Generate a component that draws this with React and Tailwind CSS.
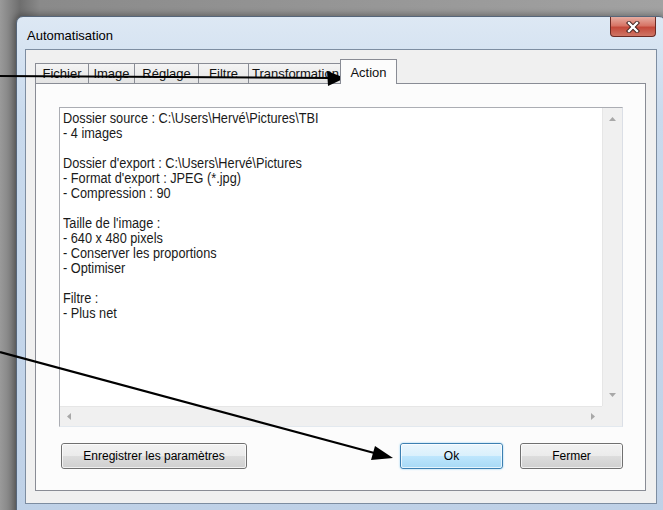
import React from "react";

const lines = [
  "Dossier source : C:\\Users\\Hervé\\Pictures\\TBI",
  "- 4 images",
  "",
  "Dossier d'export : C:\\Users\\Hervé\\Pictures",
  "- Format d'export : JPEG (*.jpg)",
  "- Compression : 90",
  "",
  "Taille de l'image :",
  "- 640 x 480 pixels",
  "- Conserver les proportions",
  "- Optimiser",
  "",
  "Filtre :",
  "- Plus net",
];

const tabs = [
  { label: "Fichier", w: "w-[54px]" },
  { label: "Image", w: "w-[47px]" },
  { label: "Réglage", w: "w-[65px]" },
  { label: "Filtre", w: "w-[51px]" },
  { label: "Transformation", w: "w-[95px]" },
];

// small greyed scroll arrows
function Tri({ dir }) {
  const horiz = dir === "left" || dir === "right";
  const pts = {
    up: "0,4 3.5,0 7,4",
    down: "0,0 7,0 3.5,4",
    left: "4,0 4,7 0,3.5",
    right: "0,0 0,7 4,3.5",
  }[dir];
  return (
    <svg width={horiz ? 4 : 7} height={horiz ? 7 : 4} viewBox={horiz ? "0 0 4 7" : "0 0 7 4"}>
      <polygon points={pts} fill="#a8a8a8" />
    </svg>
  );
}

function Btn({ children, w, primary }) {
  const look = primary
    ? "border-[#3c7fb1] bg-[linear-gradient(to_bottom,#eaf6fd_0%,#d9f0fc_50%,#bee6fd_50%,#a7d9f5_100%)] shadow-[0_0_2px_#7fc6ee]"
    : "border-[#707070] bg-[linear-gradient(to_bottom,#f2f2f2_0%,#ebebeb_50%,#dddddd_50%,#cfcfcf_100%)]";
  return (
    <div className={`${w} h-[26px] rounded-[3px] border ${look} flex items-center justify-center text-[12px] text-black`}>
      <div className="w-full h-full rounded-[2px] border border-white/70 flex items-center justify-center">{children}</div>
    </div>
  );
}

function CloseButton() {
  return (
    <div className="w-[46px] h-[20px] rounded-b-[4px] border border-t-0 border-[#6b2a24] bg-[linear-gradient(to_bottom,#e6ada2_0%,#d77566_45%,#c44a3b_55%,#cf7565_100%)] flex items-center justify-center">
      <svg width="14" height="12" viewBox="0 0 14 12">
        <path d="M3 2 L11 10 M11 2 L3 10" stroke="#3b1f1c" strokeWidth="4.2" strokeLinecap="square" />
        <path d="M3 2 L11 10 M11 2 L3 10" stroke="#ffffff" strokeWidth="2.4" strokeLinecap="square" />
      </svg>
    </div>
  );
}

export default function App() {
  return (
    <div className="relative w-[663px] h-[510px] overflow-hidden bg-[linear-gradient(to_right,#9a9a9a,#6e6e6e_3%,#8a8a8a_6%,#a2a2a2)] pl-[16px] pt-[16px] font-['Liberation_Sans',Arial,sans-serif]">
      <div className="w-[650px] h-[500px] rounded-t-[7px] border border-[#56667a] bg-[linear-gradient(to_bottom,#dde8f4,#c9daed_20%,#bfd1e7)] shadow-[0_0_6px_2px_rgba(0,0,0,0.3)] flex flex-col">
        {/* title bar */}
        <div className="h-[32px] shrink-0 flex items-start justify-between pl-[10px] pr-[9px]">
          <span className="mt-[9px] text-[13px] text-black">Automatisation</span>
          <CloseButton />
        </div>

        {/* client area */}
        <div className="mx-[8px] h-[455px] shrink-0 border border-[#7d8da1] bg-[#f0f0f0] pt-[9px] pl-[9px] pr-[10px]">
          <div className="h-[24px] flex items-end">
            {tabs.map((t, i) => (
              <div
                key={t.label}
                className={`${t.w} ${i === 0 ? "" : "-ml-px"} h-[20px] border border-b-0 border-[#898c95] bg-[linear-gradient(to_bottom,#f4f4f4,#e4e4e4)] flex items-center justify-center text-[13px] text-[#111]`}
              >
                {t.label}
              </div>
            ))}
            <div className="relative z-10 w-[57px] -ml-[3px] h-[25px] -mb-px border border-b-0 border-[#898c95] bg-[#fcfcfc] flex items-start justify-center pt-[3px] text-[13px] text-[#111]">
              Action
            </div>
          </div>

          <div className="h-[408px] border border-[#898c95] bg-[#fcfcfc] pt-[23px] pl-[23px] pr-[22px]">
            {/* text box with scroll bars */}
            <div className="w-[564px] h-[320px] border border-[#abadb3] border-r-[#dbdfe6] border-b-[#e3e9ef] bg-white flex flex-col">
              <div className="flex-1 flex min-h-0">
                <div className="flex-1 pl-[3px] pt-[3px] text-[14px] leading-[15px] text-[#1a1a1a]">
                  {lines.map((l, i) => (
                    <div key={i} className="h-[15px] whitespace-pre origin-left scale-x-[0.91]">{l}</div>
                  ))}
                </div>
                <div className="w-[20px] bg-[#f0f0f0] border-l border-[#e6e6e6] flex flex-col items-center justify-between py-[9px]">
                  <Tri dir="up" />
                  <Tri dir="down" />
                </div>
              </div>
              <div className="h-[20px] flex">
                <div className="flex-1 bg-[#f0f0f0] border-t border-[#e6e6e6] flex items-center justify-between px-[7px]">
                  <Tri dir="left" />
                  <Tri dir="right" />
                </div>
                <div className="w-[20px] bg-[#f0f0f0]" />
              </div>
            </div>

            <div className="w-[564px] mt-[16px] flex pl-[2px]">
              <Btn w="w-[186px]">Enregistrer les paramètres</Btn>
              <div className="ml-auto" />
              <Btn w="w-[103px]" primary>Ok</Btn>
              <div className="w-[17px]" />
              <Btn w="w-[103px]">Fermer</Btn>
            </div>
          </div>
        </div>
      </div>

      {/* annotation arrows */}
      <svg className="absolute inset-0 pointer-events-none" width="663" height="510" viewBox="0 0 663 510">
        <line x1="0" y1="76" x2="330" y2="78" stroke="#000" strokeWidth="2" />
        <polygon points="345,78 327,71 328,86" fill="#000" />
        <line x1="0" y1="352" x2="378" y2="454" stroke="#000" strokeWidth="2.2" />
        <polygon points="393,458 371,460 375,446" fill="#000" />
      </svg>
    </div>
  );
}
